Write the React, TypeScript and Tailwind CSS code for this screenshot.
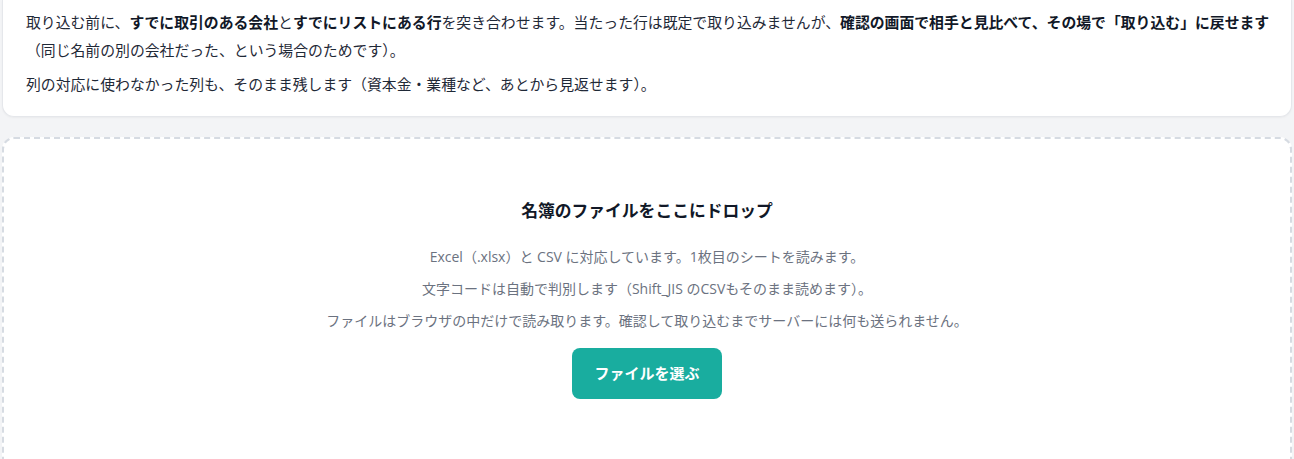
const FONT = "font-['Noto_Sans_CJK_JP','Noto_Sans',sans-serif]";

export default function App() {
  return (
    <div className={`h-[459px] overflow-hidden bg-[#f3f4f6] px-[2px] ${FONT}`}>
      {/* notes card (top is scrolled off) */}
      <div className="rounded-b-xl border border-t-0 border-[#e5e7eb] bg-white pl-[23px] pr-[10px] pt-[8px] pb-[18px] text-[14.85px] leading-[28px] text-[#1f2937] shadow-[0_1px_2px_rgba(0,0,0,0.04)]">
        <p>
          取り込む前に、<b className="font-bold text-[#111827]">すでに取引のある会社</b>と
          <b className="font-bold text-[#111827]">すでにリストにある行</b>を突き合わせます。当たった行は既定で取り込みませんが、
          <b className="font-bold text-[#111827]">確認の画面で相手と見比べて、その場で「取り込む」に戻せます</b>
          （同じ名前の別の会社だった、という場合のためです）。
        </p>
        <p className="mt-[6px]">列の対応に使わなかった列も、そのまま残します（資本金・業種など、あとから見返せます）。</p>
      </div>

      {/* drop zone */}
      <div className="mt-5 flex h-[340px] flex-col items-center rounded-xl border-2 border-dashed border-[#d6dbe2] bg-white pt-[57px]">
        <h2 className="text-[16.8px] font-bold leading-[28px] text-[#111827]">名簿のファイルをここにドロップ</h2>
        <div className="mt-[17px] flex flex-col items-center font-['Open_Sans','Noto_Sans_CJK_JP',sans-serif] text-[14px] leading-[32px] text-[#6b7280]">
          <p>Excel（.xlsx）と CSV に対応しています。1枚目のシートを読みます。</p>
          <p>文字コードは自動で判別します（Shift_JIS のCSVもそのまま読めます）。</p>
          <p>ファイルはブラウザの中だけで読み取ります。確認して取り込むまでサーバーには何も送られません。</p>
        </div>
        <button className="mt-[11px] h-[51px] rounded-lg bg-[#19ad9f] px-[22px] text-[15px] font-bold text-white">
          ファイルを選ぶ
        </button>
      </div>
    </div>
  );
}
